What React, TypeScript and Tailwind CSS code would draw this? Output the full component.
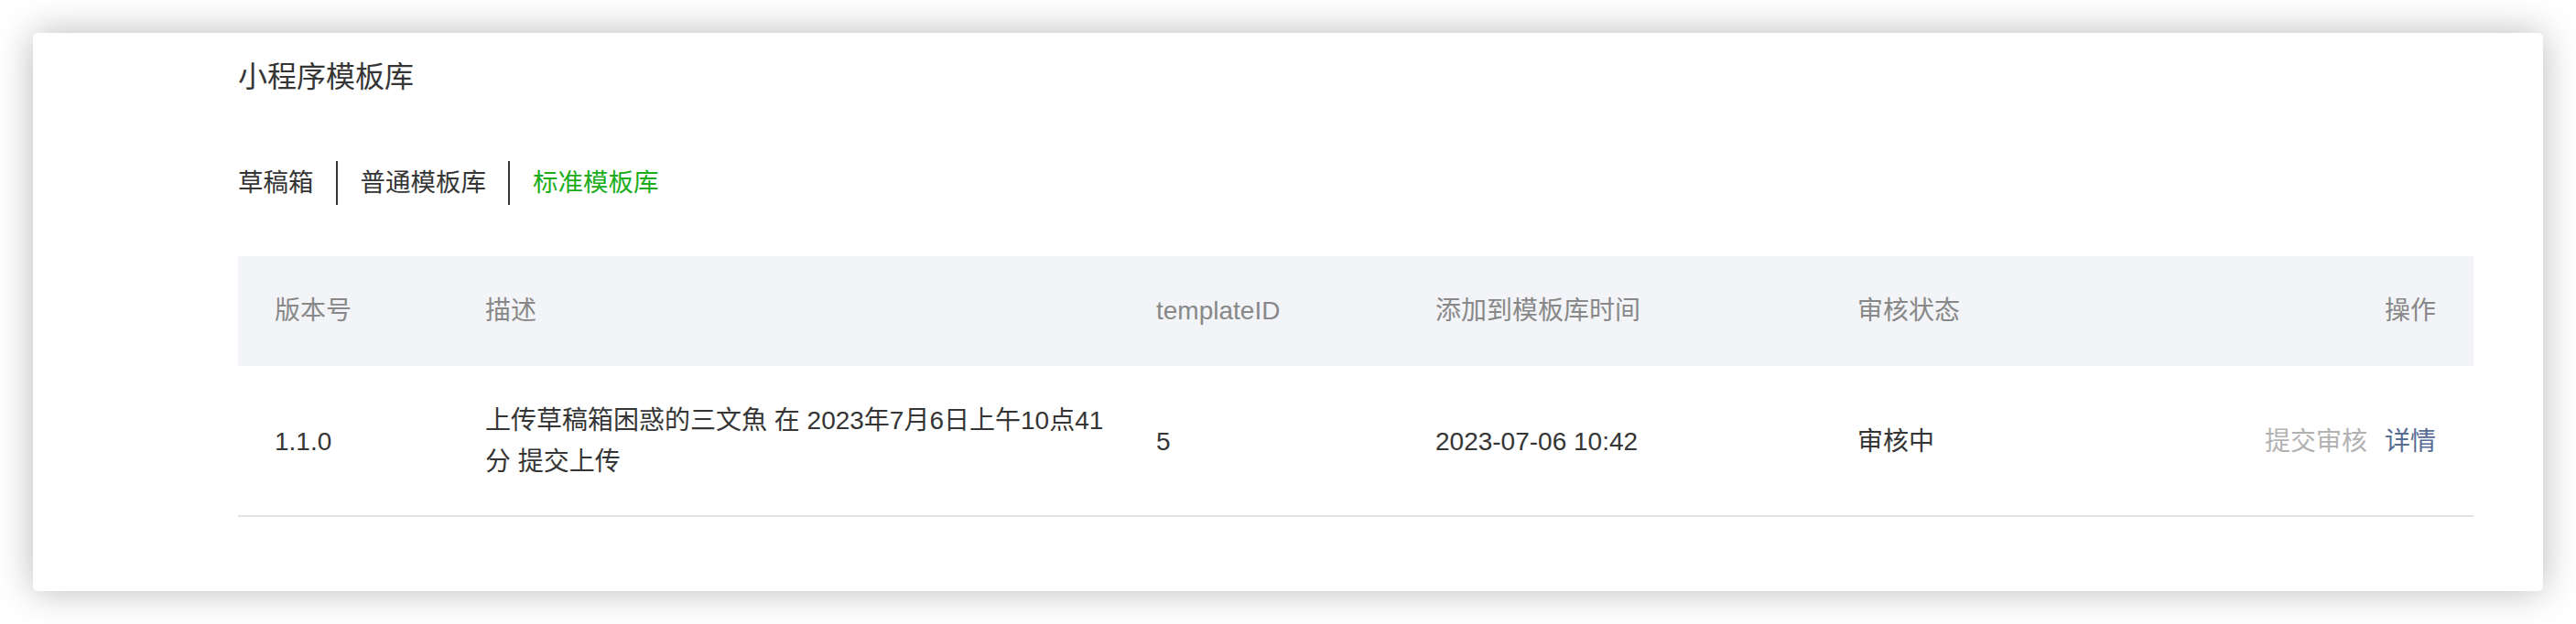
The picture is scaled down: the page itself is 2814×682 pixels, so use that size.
const font = { fontFamily: '"Liberation Sans", "Noto Sans CJK SC", sans-serif' };

function Tab({ label, active, first }: { label: string; active?: boolean; first?: boolean }) {
  return (
    <div
      className={`h-[48px] leading-[48px] text-[27.5px] ${first ? "pr-[24px]" : "pl-[25px] pr-[24px] border-l-2 border-[#353535]"} ${
        active ? "text-[#1aad19]" : "text-[#353535]"
      }`}
    >
      {label}
    </div>
  );
}

export default function App() {
  const headers = ["版本号", "描述", "templateID", "添加到模板库时间", "审核状态"];

  return (
    <div className="w-full h-[682px] bg-white p-[36px]" style={font}>
      <div className="h-[610px] bg-white rounded-[5px] shadow-[0_0_40px_rgba(0,0,0,0.28)] pt-[28px] pl-[224px] pr-[76px] text-[28px] text-[#353535]">
        <h1 className="h-[40px] leading-[40px] text-[32px] font-normal">小程序模板库</h1>

        <div className="flex mt-[72px]">
          <Tab label="草稿箱" first />
          <Tab label="普通模板库" />
          <Tab label="标准模板库" active />
        </div>

        <div className="mt-[56px]">
          <div className="grid grid-cols-[230px_733px_305px_461px_1fr_auto] h-[120px] items-center bg-[#f2f4f7] text-[#888888]">
            {headers.map((h) => (
              <div key={h} className="pl-[40px]">{h}</div>
            ))}
            <div className="pr-[41px] text-right">操作</div>
          </div>

          <div className="grid grid-cols-[230px_733px_305px_461px_1fr_auto] items-center pt-[37px] pb-[36px] leading-[45px] border-b-2 border-[#dfe3e7]">
            <div className="pl-[40px]">1.1.0</div>
            <div className="pl-[40px]">
              上传草稿箱困惑的三文魚 在 2023年7月6日上午10点41
              <br />
              分 提交上传
            </div>
            <div className="pl-[40px]">5</div>
            <div className="pl-[40px]">2023-07-06 10:42</div>
            <div className="pl-[40px]">审核中</div>
            <div className="pr-[41px] text-right flex gap-[19px] justify-end">
              <span className="text-[#b2b2b2]">提交审核</span>
              <span className="text-[#576b95]">详情</span>
            </div>
          </div>
        </div>
      </div>
    </div>
  );
}
